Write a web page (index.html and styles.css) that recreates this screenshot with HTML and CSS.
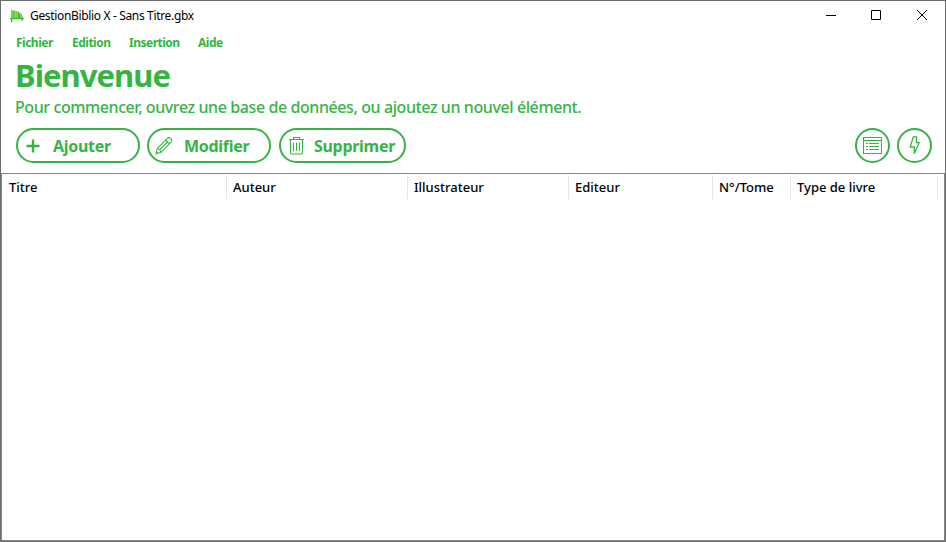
FILE: index.html
```html
<!DOCTYPE html>
<html lang="fr">
<head>
<meta charset="utf-8">
<title>GestionBiblio X</title>
<link rel="stylesheet" href="styles.css">
</head>
<body>
<div class="window">
  <header class="titlebar">
    <svg class="logo" width="14" height="12" viewBox="0 0 14 12"><path fill="#7ed03c" d="M1 0h2v8H1zM5.200 1h2v7h-2z"/><path fill="#45bd35" d="M3.200.5h1.700V8H3.200zM7.400 1.500l1.800.3L11 8H7.400zM9.800 3l1.200.5L13 8h-1.400z"/><path fill="#3fb63a" d="M0 8h14v1.300H0zM1 9.300h1.300V12H1zM11.500 9.300h1.300V11h-1.300z"/></svg>
    <span class="caption">GestionBiblio X - Sans Titre.gbx</span>
    <div class="controls">
      <svg width="46" height="29" viewBox="0 0 46 29"><path d="M18 14.500h10"/></svg>
      <svg width="46" height="29" viewBox="0 0 46 29"><path d="M17.500 9.500h9v9h-9z"/></svg>
      <svg width="46" height="29" viewBox="0 0 46 29"><path d="M17 9l10 10M27 9L17 19"/></svg>
    </div>
  </header>
  <nav class="menu"><span class="m1">Fichier</span><span class="m2">Edition</span><span class="m3">Insertion</span><span class="m4">Aide</span></nav>
  <h1>Bienvenue</h1>
  <p class="intro">Pour commencer, ouvrez une base de données, ou ajoutez un nouvel élément.</p>
  <div class="toolbar">
    <button class="pill add"><svg width="14" height="14" viewBox="0 0 14 14"><path stroke-width="2.400" d="M7 .5v13M.5 7h13"/></svg><span>Ajouter</span></button>
    <button class="pill edit"><svg width="18" height="18" viewBox="0 0 18 18"><path d="M1 16.800l1.200-5.300L12.300 1.400q1.700-1.500 3.500.2t.2 3.600L6 15.300zM2.200 11.500q3 .6 3.800 3.800M10.700 3l3.800 3.800M4.800 12.700l7.700-7.700M1.300 14.800l1.700 1.700"/></svg><span>Modifier</span></button>
    <button class="pill remove"><svg width="15" height="18" viewBox="0 0 15 18"><path d="M0 2.500h15M4.500 2.500V.5h6v2M1.500 3v12.500q0 1.500 1.500 1.500h9q1.500 0 1.500-1.500V3M4.500 5.500v8.500M7.500 5.500v8.500M10.500 5.500v8.500"/></svg><span>Supprimer</span></button>
    <div class="spacer"></div>
    <button class="round"><svg width="19" height="17" viewBox="0 0 19 17"><path d="M.5.500h18v16H.5zM.5 3.500h18M3 6.500h2M6 6.500h10M3 9.500h2M6 9.500h10M3 12.500h2M6 12.500h10"/></svg></button>
    <button class="round"><svg width="11" height="19" viewBox="0 0 11 19"><path stroke-width="1.300" d="M4.300.8h3.200v5.900h2.600L5.200 17.800l.2-6.800H1.200z"/></svg></button>
  </div>
  <main class="list">
    <div class="columns"><span class="c1">Titre</span><span class="c2">Auteur</span><span class="c3">Illustrateur</span><span class="c4">Editeur</span><span class="c5">N°/Tome</span><span class="c6">Type de livre</span></div>
  </main>
</div>
</body>
</html>
```
FILE: styles.css
```css
* { box-sizing: border-box; }
body { margin: 0; overflow: hidden; }
.window {
  width: 946px; height: 542px; border: 1px solid #6b6b6b; background: #fff;
  display: flex; flex-direction: column; color: #35b445;
  font-family: "Noto Sans", "Open Sans", sans-serif;
}
.titlebar { height: 29px; display: flex; align-items: center; padding-left: 9px; flex: none; }
.caption { margin-left: 6px; font-size: 12px; color: #000; letter-spacing: -.34px; white-space: nowrap; }
.controls { margin-left: auto; display: flex; margin-right: -1px; }
.controls svg { fill: none; stroke: #000; stroke-width: 1; }
.menu { display: flex; height: 26px; padding-left: 15px; font-size: 12px; font-weight: 700; line-height: 26px; letter-spacing: -.5px; flex: none; }
.menu span { white-space: nowrap; }
.m1 { width: 56px; } .m2 { width: 57px; } .m3 { width: 69px; }
h1 { margin: 0 0 0 14px; height: 40px; line-height: 39px; font-size: 31px; font-weight: 700; letter-spacing: -.95px; }
.intro { margin: 0 0 0 14px; height: 23px; line-height: 23px; font-size: 16px; font-weight: 500; letter-spacing: -.41px; white-space: nowrap; }
.toolbar { display: flex; height: 54px; padding: 9px 13px 0 15px; flex: none; }
button { height: 35px; border: 2px solid #35b445; background: #fff; color: #35b445; padding: 0; display: flex; align-items: center; flex: none; font: 700 16px "Noto Sans", "Open Sans", sans-serif; }
button svg { fill: none; stroke: #35b445; stroke-width: 1.1; flex: none; }
.pill { border-width: 2.500px; border-radius: 18px; }
.pill span { letter-spacing: -.3px; white-space: nowrap; }
.add { width: 124px; padding-left: 8px; margin-right: 7px; }
.add span { margin-left: 13px; }
.edit { width: 124px; padding-left: 6px; margin-right: 8px; }
.edit span { margin-left: 11px; }
.remove { width: 127px; padding-left: 8px; }
.remove span { margin-left: 10px; }
.spacer { flex: 1; }
.round { width: 35px; border-radius: 50%; justify-content: center; margin-left: 7px; }
.list { flex: 1; border: 1px solid #828790; }
.columns { display: flex; height: 25px; margin-top: 1px; color: #000; font-size: 13px; font-weight: 500; line-height: 24px; }
.columns span { border-right: 1px solid #e5e5e5; padding-left: 6px; white-space: nowrap; flex: none; height: 24px; }
.columns .c1 { width: 225px; padding-left: 7px; }
.c2 { width: 181px; } .c3 { width: 161px; } .c4 { width: 144px; } .c5 { width: 78px; } .c6 { width: 147px; }
```
